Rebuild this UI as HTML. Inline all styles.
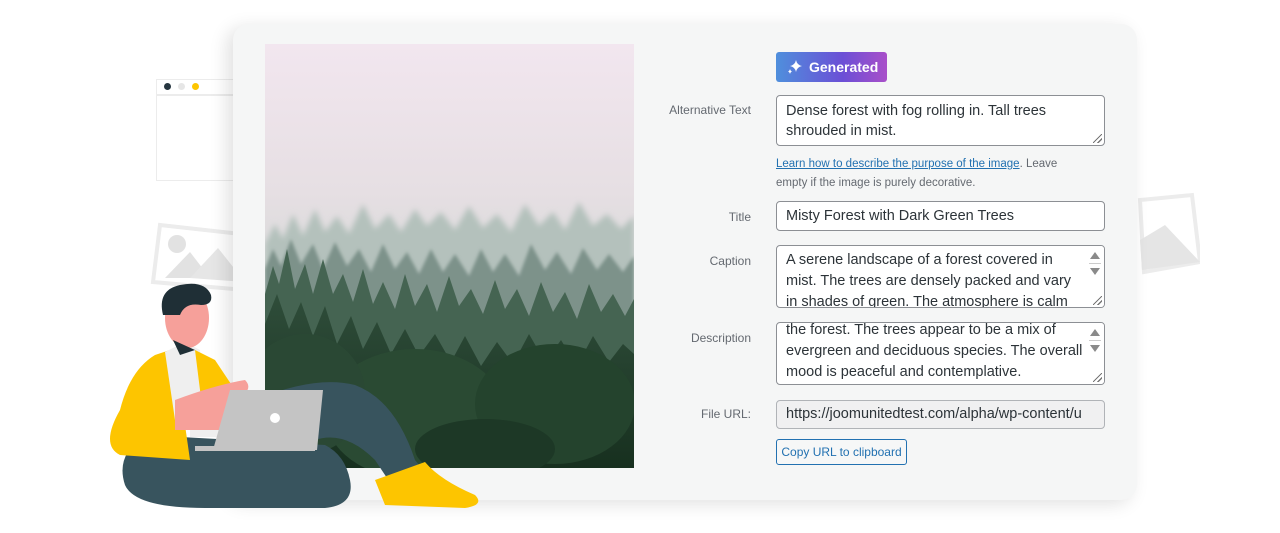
<!DOCTYPE html>
<html><head><meta charset="utf-8"><style>
*{margin:0;padding:0;box-sizing:border-box}
body{width:1280px;height:533px;background:#fff;position:relative;overflow:hidden;font-family:"Liberation Sans",sans-serif}
.a{position:absolute}
.card{left:233px;top:24px;width:904px;height:476px;background:#f5f6f6;border-radius:16px;box-shadow:-6px 4px 18px rgba(0,0,0,.12)}
.lbl{position:absolute;font-size:12px;color:#646970;text-align:right;width:160px;left:591px}
.in{position:absolute;left:776px;width:329px;background:#fff;border:1px solid #8c8f94;border-radius:4px;font-size:14.5px;color:#2c3338;padding:0 9px;overflow:hidden;white-space:nowrap}
.sb{position:absolute;right:0;top:0;width:19px;height:100%;background:#fff}
.up{position:absolute;left:5px;top:6px;width:0;height:0;border-left:5px solid transparent;border-right:5px solid transparent;border-bottom:7px solid #8a8a8a}
.dn{position:absolute;left:5px;top:22px;width:0;height:0;border-left:5px solid transparent;border-right:5px solid transparent;border-top:7px solid #8a8a8a}
.ln{position:absolute;left:4px;top:17px;width:12px;height:1px;background:#ccc}
.rs{position:absolute;right:2px;bottom:2px;width:9px;height:9px;background:linear-gradient(135deg,transparent 45%,#777 45%,#777 55%,transparent 55%,transparent 72%,#777 72%,#777 82%,transparent 82%)}
</style></head><body>
<div class="a" style="left:156px;top:79px;width:100px;height:102px;border:1.5px solid #ececec;background:#fff"></div>
<div class="a" style="left:156px;top:94px;width:100px;height:1.5px;background:#ececec"></div>
<div class="a" style="left:164px;top:83px;width:7px;height:7px;border-radius:50%;background:#263640"></div>
<div class="a" style="left:178px;top:83px;width:7px;height:7px;border-radius:50%;background:#e6e6e6"></div>
<div class="a" style="left:192px;top:83px;width:7px;height:7px;border-radius:50%;background:#fdc500"></div>
<svg class="a" style="left:150px;top:220px" width="110" height="80"><polygon points="10,5 100,15 95,70 3,62" fill="none" stroke="#ececec" stroke-width="4"/><circle cx="27" cy="24" r="9" fill="#e2e2e2"/><polygon points="15,58 40,32 60,58" fill="#e2e2e2"/><polygon points="40,58 68,28 95,62" fill="#e6e6e6"/></svg>
<svg class="a" style="left:1120px;top:190px" width="80" height="90"><polygon points="20,10 72,5 80,72 24,82" fill="none" stroke="#ececec" stroke-width="4"/><polygon points="20,50 45,35 80,72 22,80" fill="#e5e5e5"/></svg>
<div class="a card"></div>
<svg class="a" style="left:265px;top:44px" width="369" height="424" viewBox="0 0 369 424">
<defs><linearGradient id="sky" x1="0" y1="0" x2="0" y2="1"><stop offset="0" stop-color="#f2e6ef"/><stop offset=".35" stop-color="#e6dfe3"/><stop offset=".55" stop-color="#d6d9d8"/><stop offset="1" stop-color="#b0bcb8"/></linearGradient>
<linearGradient id="fg" x1="0" y1="0" x2="0" y2="1"><stop offset="0" stop-color="#2f4d3a"/><stop offset="1" stop-color="#17301f"/></linearGradient>
<filter id="b1"><feGaussianBlur stdDeviation="3"/></filter><filter id="b2"><feGaussianBlur stdDeviation="1.5"/></filter></defs>
<rect width="369" height="424" fill="url(#sky)"/>
<path filter="url(#b1)" d="M0,200 L10,180 18,195 28,170 38,192 50,165 60,188 72,172 84,190 98,160 110,185 124,170 136,188 150,165 162,182 176,168 190,186 204,162 218,184 232,170 246,188 260,160 274,182 288,168 300,186 314,158 328,182 342,170 356,185 369,172 L369,300 L0,300Z" fill="#b4c1bc"/>
<path filter="url(#b2)" d="M0,225 L8,205 16,222 26,195 36,220 48,200 58,225 70,198 82,222 94,205 106,228 118,200 130,225 142,208 154,230 166,205 178,228 190,210 204,232 216,205 228,228 240,210 254,232 266,200 280,226 292,208 306,230 318,204 332,226 344,210 358,228 369,212 L369,424 L0,424Z" fill="#7d928a"/>
<path d="M0,250 L8,222 14,240 22,205 30,245 40,220 48,250 58,215 68,250 78,230 88,258 98,225 108,260 118,238 130,265 140,230 150,262 162,240 172,268 184,232 194,262 206,245 218,270 230,236 240,265 252,245 264,272 276,238 288,268 300,248 312,275 324,240 336,268 348,250 360,272 369,255 L369,424 L0,424Z" fill="#456452"/>
<path d="M0,280 L12,250 24,285 36,258 48,292 60,262 72,300 86,272 98,305 112,278 126,310 140,285 154,312 170,290 186,318 200,292 216,322 232,298 248,320 264,290 280,318 296,296 312,322 328,292 344,318 358,300 369,310 L369,424 L0,424Z" fill="url(#fg)"/>
<ellipse cx="150" cy="370" rx="90" ry="65" fill="#2a4a33"/>
<ellipse cx="290" cy="360" rx="80" ry="60" fill="#24432d"/>
<ellipse cx="40" cy="350" rx="60" ry="60" fill="#2a4834"/>
<ellipse cx="220" cy="405" rx="70" ry="30" fill="#1d3826"/>
</svg>
<svg class="a" style="left:95px;top:280px" width="390" height="235" viewBox="0 0 390 235">
<path d="M50,155 Q20,175 30,205 Q40,228 110,228 L230,228 Q260,225 255,200 Q250,175 230,165 Z" fill="#38545e"/>
<path d="M160,120 Q220,95 260,105 Q300,120 320,180 L340,205 L300,210 L280,180 Q250,150 220,160 Z" fill="#38545e"/>
<path d="M280,200 L330,182 Q345,200 380,215 Q390,225 370,228 L290,225 Z" fill="#fdc500"/>
<path d="M25,130 Q35,90 60,75 L75,70 L85,110 L95,180 L25,175 Q5,165 25,130Z" fill="#fdc500"/>
<path d="M70,72 L90,62 L105,70 L110,120 L80,140 Z" fill="#efefef"/>
<path d="M100,70 L120,80 L140,110 L110,150 Z" fill="#fdc500"/>
<path d="M80,120 Q120,105 150,100 Q160,110 140,120 L130,140 Q120,165 105,150 L80,150 Z" fill="#f6a09a"/>
<rect x="95" y="150" width="60" height="7" fill="#efefef"/>
<polygon points="135,110 228,110 222,170 118,170" fill="#c4c4c4"/>
<circle cx="180" cy="138" r="5" fill="#fff"/>
<rect x="100" y="166" width="120" height="5" fill="#c4c4c4"/>
<ellipse cx="92" cy="38" rx="22" ry="30" fill="#f6a09a"/>
<path d="M68,35 Q62,10 85,5 Q110,0 116,15 Q118,25 106,25 Q90,22 85,35 Z" fill="#1f2f36"/>
<path d="M78,60 L100,70 L85,75 Z" fill="#1f2f36"/>
</svg>
<div class="a" style="left:776px;top:52px;width:111px;height:30px;border-radius:3px;background:linear-gradient(90deg,#4f8fdc,#6b4fd6 60%,#a94fc9);color:#fff;font-weight:bold;font-size:14px;line-height:30px;padding-left:33px">Generated</div>
<svg class="a" style="left:787px;top:59px" width="16" height="16"><path d="M9,1 Q10,6 15,7 Q10,8 9,13 Q8,8 3,7 Q8,6 9,1Z M3,10 Q3.5,12 5,12.5 Q3.5,13 3,15 Q2.5,13 1,12.5 Q2.5,12 3,10Z" fill="#fff"/></svg>
<div class="lbl" style="top:103px">Alternative Text</div>
<div class="in" style="top:95px;height:51px;line-height:20px;padding-top:5px">Dense forest with fog rolling in. Tall trees<br>shrouded in mist.<div class="rs"></div></div>
<div class="a" style="left:776px;top:155px;font-size:11.5px;color:#646970;line-height:19px"><span style="color:#2271b1;text-decoration:underline">Learn how to describe the purpose of the image</span>. Leave<br>empty if the image is purely decorative.</div>
<div class="lbl" style="top:210px">Title</div>
<div class="in" style="top:201px;height:30px;line-height:28px">Misty Forest with Dark Green Trees</div>
<div class="lbl" style="top:254px">Caption</div>
<div class="in" style="top:245px;height:63px;line-height:21px;padding-top:4px">A serene landscape of a forest covered in<br>mist. The trees are densely packed and vary<br>in shades of green. The atmosphere is calm<div class="sb"><div class="up"></div><div class="ln"></div><div class="dn"></div><div class="rs"></div></div></div>
<div class="lbl" style="top:331px">Description</div>
<div class="in" style="top:322px;height:63px;line-height:21px;padding-top:0"><div style="margin-top:-3px">the forest. The trees appear to be a mix of<br>evergreen and deciduous species. The overall<br>mood is peaceful and contemplative.</div><div class="sb"><div class="up"></div><div class="ln"></div><div class="dn"></div><div class="rs"></div></div></div>
<div class="lbl" style="top:407px">File URL:</div>
<div class="in" style="top:400px;height:29px;line-height:27px;background:#f0f0f1;border-color:#b0b3b7">https://joomunitedtest.com/alpha/wp-content/u</div>
<div class="a" style="left:776px;top:439px;width:131px;height:26px;border:1px solid #2271b1;border-radius:3px;background:#f6f7f7;color:#2271b1;font-size:12px;line-height:24px;text-align:center">Copy URL to clipboard</div>
</body></html>
